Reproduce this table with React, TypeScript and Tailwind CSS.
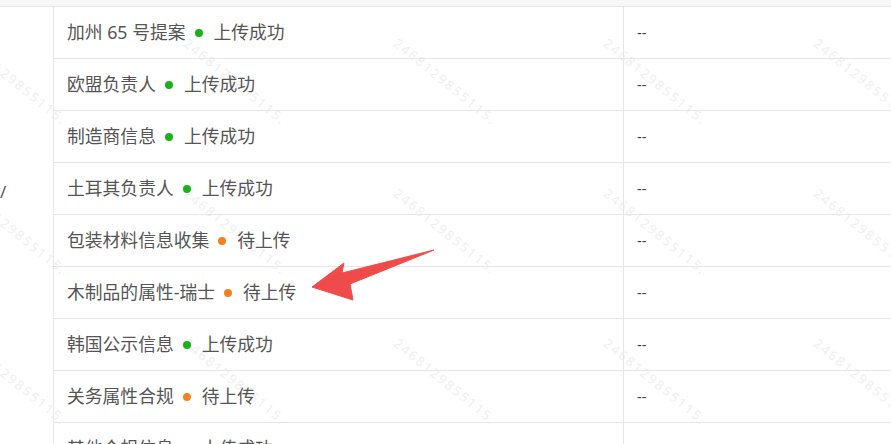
type Row = { name: string; done: boolean };

const rows: Row[] = [
  { name: "加州 65 号提案", done: true },
  { name: "欧盟负责人", done: true },
  { name: "制造商信息", done: true },
  { name: "土耳其负责人", done: true },
  { name: "包装材料信息收集", done: false },
  { name: "木制品的属性-瑞士", done: false },
  { name: "韩国公示信息", done: true },
  { name: "关务属性合规", done: false },
  { name: "其他合规信息", done: true },
];

const marks = [15, 235, 445, 655, 865].flatMap((x) => [82, 232, 382].map((y) => ({ x, y })));

function StatusCell({ name, done }: Row) {
  return (
    <div className="flex items-center pl-[13px] text-[17.8px] text-[#555]">
      <span>{name}</span>
      <span
        className={`ml-[9px] mr-[11px] h-[8px] w-[8px] rounded-full ${done ? "bg-[#19b21d]" : "bg-[#f5821f]"}`}
      />
      <span>{done ? "上传成功" : "待上传"}</span>
    </div>
  );
}

export default function App() {
  return (
    <div
      className="relative h-[444px] w-[891px] overflow-hidden bg-white"
      style={{ fontFamily: '"Noto Sans", "Noto Sans CJK SC", sans-serif' }}
    >
      {/* watermark, under the table */}
      {marks.map((m) => (
        <span
          key={`${m.x}-${m.y}`}
          className="pointer-events-none absolute -translate-x-1/2 -translate-y-1/2 rotate-[39deg] whitespace-nowrap text-[13px] tracking-[2px] text-[#efefef]"
          style={{ left: m.x, top: m.y }}
        >
          2468129855115.
        </span>
      ))}

      <div className="relative">
        <div className="h-[7px] border-b border-[#e6e6e6] bg-[#f7f7f7]" />
        <div className="flex">
          <div className="w-[54px] shrink-0 border-r border-[#e6e6e6]">
            <div className="pt-[176px] text-[17px] leading-none text-[#595959]">/</div>
          </div>
          <div className="flex-1">
            {rows.map((r) => (
              <div key={r.name} className="flex h-[52px] border-b border-[#e6e6e6]">
                <div className="flex w-[570px] shrink-0 items-center border-r border-[#e6e6e6]">
                  <StatusCell {...r} />
                </div>
                <div className="flex items-center pl-[13px] text-[15px] text-[#444]">--</div>
              </div>
            ))}
          </div>
        </div>
      </div>

      {/* arrow annotation */}
      <svg className="pointer-events-none absolute left-0 top-0" width="891" height="444">
        <polygon
          points="312,287 344,263 342,273 434,250 350,284 353,300"
          fill="#f04b4b"
          stroke="#f04b4b"
          strokeWidth="1"
          strokeLinejoin="round"
        />
      </svg>
    </div>
  );
}
